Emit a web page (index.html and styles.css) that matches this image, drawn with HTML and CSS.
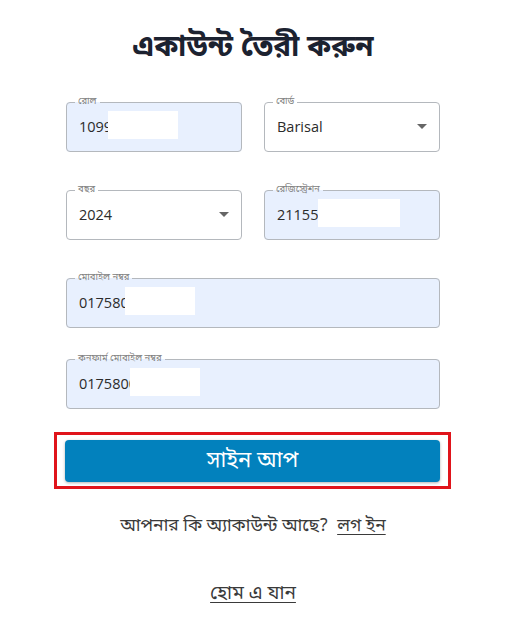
FILE: index.html
```html
<!DOCTYPE html>
<html lang="bn">
<head>
<meta charset="utf-8">
<title>একাউন্ট তৈরী করুন</title>
<link rel="stylesheet" href="styles.css">
</head>
<body>
<main class="page">
  <h1 class="title">একাউন্ট তৈরী করুন</h1>
  <form class="form">
    <div class="row two">
      <fieldset class="field filled">
        <legend>রোল</legend>
        <div class="value">1099<span class="mask mask-roll"></span></div>
      </fieldset>
      <fieldset class="field">
        <legend>বোর্ড</legend>
        <div class="value select">Barisal<span class="caret"></span></div>
      </fieldset>
    </div>
    <div class="row two">
      <fieldset class="field">
        <legend>বছর</legend>
        <div class="value select">2024<span class="caret"></span></div>
      </fieldset>
      <fieldset class="field filled">
        <legend>রেজিস্ট্রেশন</legend>
        <div class="value">21155<span class="mask mask-reg"></span></div>
      </fieldset>
    </div>
    <div class="row">
      <fieldset class="field filled">
        <legend>মোবাইল নম্বর</legend>
        <div class="value">017580<span class="mask mask-mob"></span></div>
      </fieldset>
    </div>
    <div class="row tight">
      <fieldset class="field filled">
        <legend>কনফার্ম মোবাইল নম্বর</legend>
        <div class="value">0175800<span class="mask mask-conf"></span></div>
      </fieldset>
    </div>
    <div class="highlight">
      <button type="button" class="submit">সাইন আপ</button>
    </div>
  </form>
  <p class="login">আপনার কি অ্যাকাউন্ট আছে?&nbsp; <a href="#">লগ ইন</a></p>
  <p class="home"><a href="#">হোম এ যান</a></p>
</main>
</body>
</html>
```
FILE: styles.css
```css
* { box-sizing: border-box; }
html, body { margin: 0; padding: 0; background: #fff; }
body {
  font-family: "Noto Sans Bengali", "Noto Sans", "Open Sans", "Liberation Sans", sans-serif;
  color: #333;
}
.page {
  width: 374px;
  margin: 0 auto;
  padding-top: 31px;
}
.title {
  margin: 0 0 30px;
  text-align: center;
  font-size: 29.5px;
  line-height: 36px;
  font-weight: 700;
  color: #1c2230;
}
.form { display: flex; flex-direction: column; }
.row { display: flex; gap: 22px; margin-bottom: 33px; }
.row.tight { margin-bottom: 23px; }
.row .field { flex: 1 1 0; }
.row:nth-child(3) { margin-bottom: 26px; }
.field {
  margin: 0;
  padding: 0 12px;
  border: 1px solid #b4b8bd;
  border-radius: 4px;
  min-width: 0;
  height: 55px;
  background: #fff;
}
.field.filled { background: #e8f0fe; }
.field legend {
  margin-left: -4px;
  padding: 0 3px;
  font-size: 9.5px;
  line-height: 10px;
  color: #808080;
}
.value {
  position: relative;
  height: 39px;
  line-height: 39px;
  font-family: "Open Sans", "Noto Sans", sans-serif;
  font-size: 14.5px;
  color: #2b2b2b;
  white-space: nowrap;
  overflow: hidden;
}
.mask {
  position: absolute;
  top: 4px;
  height: 28px;
  background: #fff;
}
.mask-roll { left: 29px; width: 70px; }
.mask-reg { left: 41px; width: 82px; }
.mask-mob { left: 46px; width: 70px; }
.mask-conf { left: 51px; width: 70px; }
.select .caret {
  position: absolute;
  right: 0;
  top: 17px;
  width: 0;
  height: 0;
  border-left: 5px solid transparent;
  border-right: 5px solid transparent;
  border-top: 5px solid #666;
}
.highlight {
  margin: 0 -11px 0 -12px;
  padding: 5px 8px 4px;
  border: 3px solid #e0141b;
}
.submit {
  display: block;
  width: 100%;
  height: 42px;
  border: 0;
  border-radius: 4px;
  background: #0281bd;
  color: #fff;
  font-family: inherit;
  font-size: 22px;
  box-shadow: 0 1px 3px rgba(0,0,0,0.3);
}
.login {
  margin: 25px 0 0;
  text-align: center;
  font-size: 17.5px;
  line-height: 26px;
  color: #3a3a3a;
}
.home {
  margin: 42px 0 0;
  text-align: center;
  font-size: 19px;
  line-height: 26px;
}
a { color: #3a3a3a; text-decoration: underline; text-decoration-thickness: 1px; text-underline-offset: 3px; }
```
